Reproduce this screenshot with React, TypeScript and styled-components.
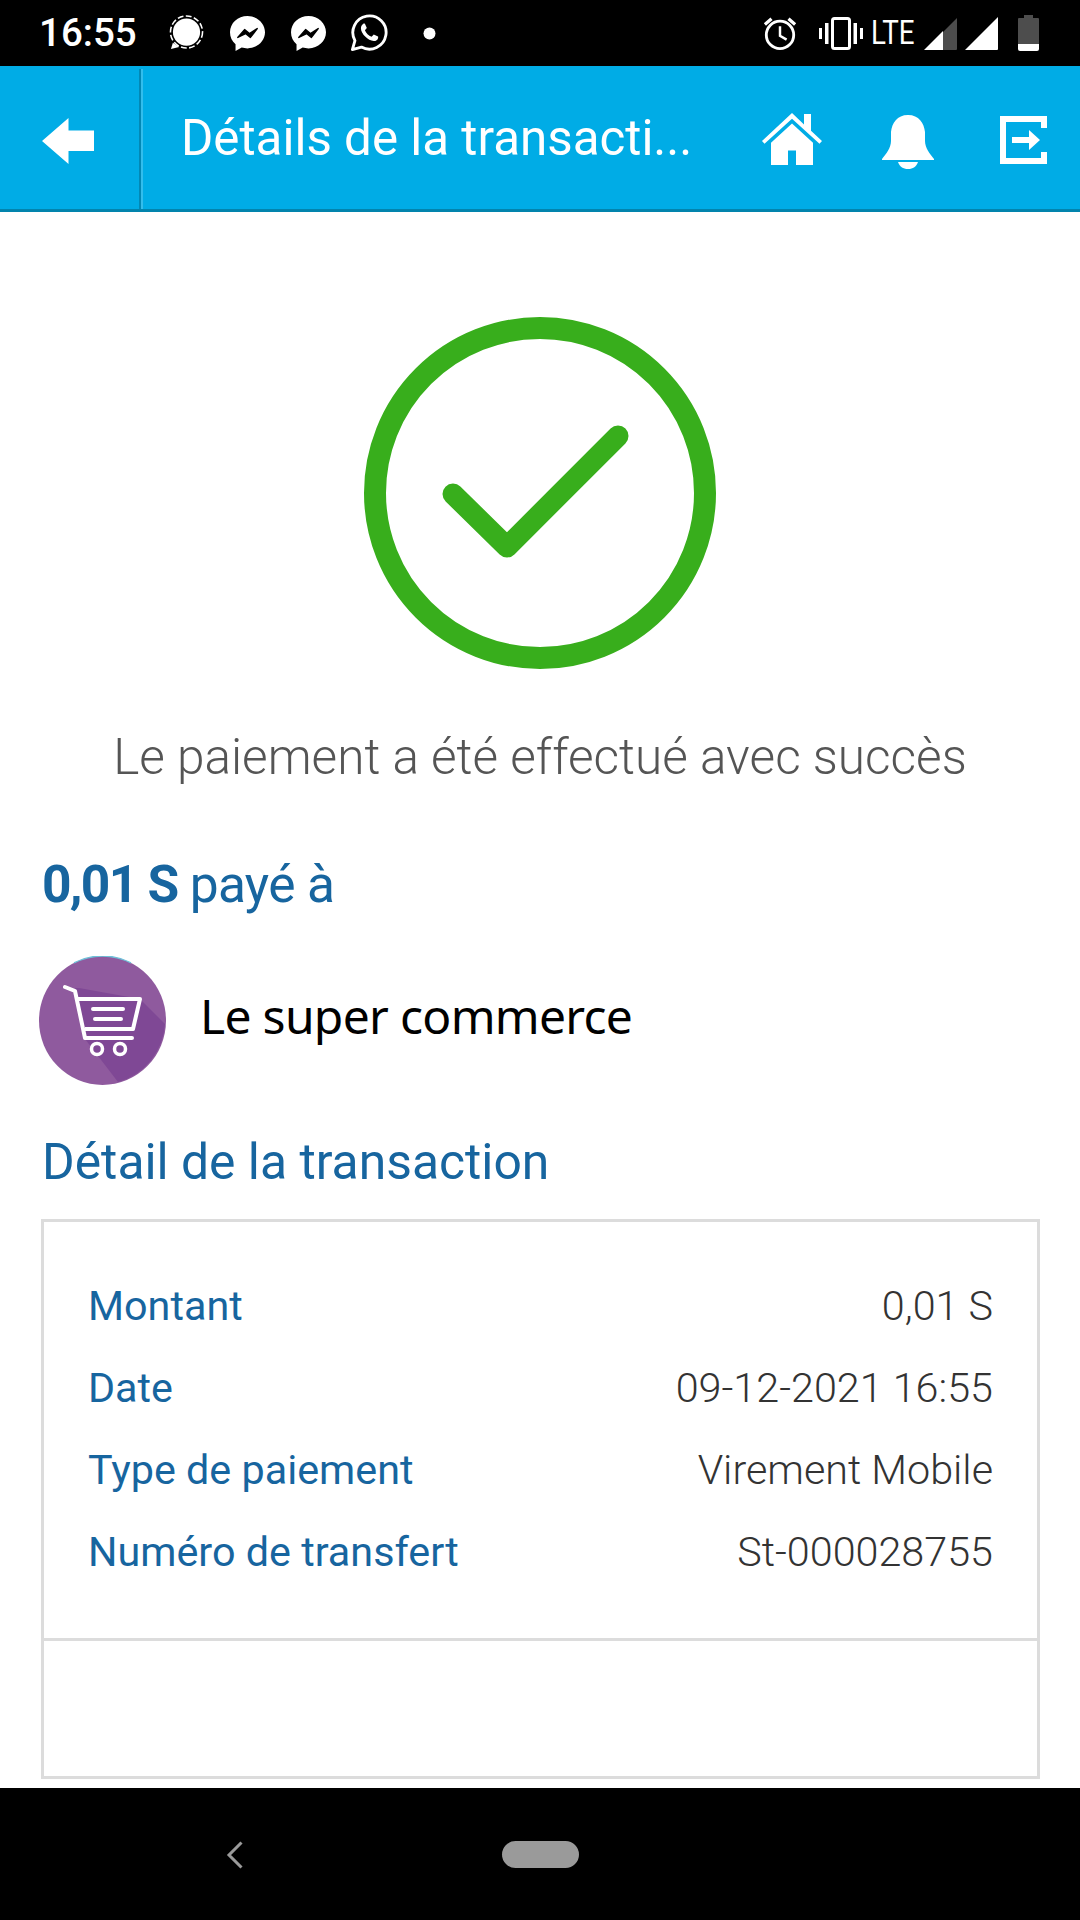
import React from "react";
import styled, { createGlobalStyle } from "styled-components";

const Global = createGlobalStyle`
  html, body { margin: 0; padding: 0; background: #fff; }
  * { box-sizing: border-box; }
`;

const Page = styled.div`
  width: 1080px;
  height: 1920px;
  display: flex;
  flex-direction: column;
  font-family: Roboto, "Liberation Sans", sans-serif;
  overflow: hidden;
`;

const StatusBar = styled.div`
  height: 66px;
  flex: none;
  background: #000;
  display: flex;
  align-items: center;
  padding: 0 41px 0 39px;
  color: #fff;
`;

const Clock = styled.span`
  font-size: 38.5px;
  font-weight: 500;
  width: 130px;
  line-height: 68px;
`;

const StatusGroup = styled.div<{ $right?: boolean }>`
  display: flex;
  align-items: center;
  margin-left: ${(p) => (p.$right ? "auto" : "0")};
`;

const StatusIcon = styled.svg<{ $ml?: number }>`
  display: block;
  flex: none;
  margin-left: ${(p) => p.$ml ?? 0}px;
`;

const Lte = styled.span`
  font-size: 33px;
  font-weight: 400;
  line-height: 66px;
  margin: 0 9px 0 8px;
  width: 44px;
  white-space: nowrap;
  transform: scaleX(0.84);
  transform-origin: left center;
`;

const AppBar = styled.header`
  height: 146px;
  flex: none;
  background: #00ace6;
  border-bottom: 3px solid #0284ad;
  display: flex;
  align-items: stretch;
`;

const BackCell = styled.div`
  width: 141px;
  flex: none;
  padding: 49px 0 0 42px;
  margin-top: 3px;
  border-right: 2px solid #0288b5;
  box-shadow: 2px 0 0 #33bdec;
`;

const BarTitle = styled.h1`
  margin: 0;
  flex: 1;
  padding-left: 40px;
  font-size: 49.3px;
  font-weight: 400;
  color: #fff;
  line-height: 145px;
  white-space: nowrap;
`;

const BarIcons = styled.div`
  display: flex;
  align-items: flex-start;
  padding-right: 33px;
`;

const BarIcon = styled.svg<{ $ml: number; $mt: number }>`
  margin: ${(p) => p.$mt}px 0 0 ${(p) => p.$ml}px;
  display: block;
  fill: #fff;
`;

const Body = styled.main`
  flex: 1;
  display: flex;
  flex-direction: column;
  min-height: 0;
`;

const HeroIcon = styled.svg`
  display: block;
  flex: none;
  margin: 105px auto 0;
`;

const Message = styled.p`
  margin: 58px 0 0;
  text-align: center;
  font-size: 49.5px;
  font-weight: 300;
  line-height: 60px;
  color: #555;
  white-space: nowrap;
`;

const Amount = styled.h2`
  margin: 68px 0 0 42px;
  font-size: 51.5px;
  font-weight: 400;
  line-height: 60px;
  letter-spacing: -0.7px;
  color: #17659f;
`;

const AmountValue = styled.b`
  font-weight: 700;
  letter-spacing: -1.7px;
`;

const Merchant = styled.div`
  margin: 41px 0 0 39px;
  display: flex;
  align-items: center;
  gap: 34px;
`;

const MerchantName = styled.span`
  font-family: "Noto Sans", "Open Sans", sans-serif;
  font-size: 48px;
  color: #000;
  line-height: 60px;
  letter-spacing: -0.7px;
  margin-bottom: 10px;
`;

const SectionTitle = styled.h3`
  margin: 47px 0 0 42px;
  font-size: 49.8px;
  font-weight: 400;
  line-height: 60px;
  color: #17659f;
`;

const Card = styled.section`
  margin: 27px 40px 0 41px;
  height: 560px;
  border: 3px solid #dcdcdc;
  display: flex;
  flex-direction: column;
`;

const Rows = styled.div`
  height: 419px;
  flex: none;
  padding: 43px 44px 0 44px;
  border-bottom: 3px solid #dcdcdc;
`;

const Row = styled.div`
  height: 82px;
  display: flex;
  justify-content: space-between;
  align-items: center;
  font-size: 41.3px;
`;

const Label = styled.span`
  color: #17659f;
`;

const Value = styled.span`
  color: #333;
  font-weight: 300;
`;

const NavBar = styled.footer`
  height: 132px;
  flex: none;
  background: #000;
  position: relative;
  display: flex;
  align-items: center;
  justify-content: center;
`;

const NavBack = styled.svg`
  position: absolute;
  left: 226px;
  top: 53px;
`;

const Pill = styled.div`
  width: 77px;
  height: 27px;
  border-radius: 14px;
  background: #9a9a9a;
  margin-left: 1px;
  margin-top: 1px;
`;

const rows = [
  ["Montant", "0,01 S"],
  ["Date", "09-12-2021 16:55"],
  ["Type de paiement", "Virement Mobile"],
  ["Numéro de transfert", "St-000028755"],
];

const Messenger = () => (
  <StatusIcon $ml={26} width="35" height="35" viewBox="0 0 36 36" preserveAspectRatio="none">
    <path d="M18 0C8 0 0 7.300 0 16.800c0 5 2.100 9.300 5.700 12.300V36l6.300-3.500c1.900.5 3.900.8 6 .8 10 0 18-7.400 18-16.500S28 0 18 0z" fill="#fff" />
    <path d="M8 22l7-8 5 4 8-5-7 9-5-4z" fill="#000" stroke="#000" strokeWidth="1.500" strokeLinejoin="round" />
  </StatusIcon>
);

export default function App() {
  return (
    <Page>
      <Global />
      <StatusBar>
        <Clock>16:55</Clock>
        <StatusGroup>
          <StatusIcon width="35" height="36" viewBox="0 0 36 36">
            <circle cx="18" cy="17" r="14" fill="#fff" />
            <path d="M4 28l-2 6.500 8.500-2" fill="#fff" />
            <circle cx="18" cy="17" r="16.500" fill="none" stroke="#fff" strokeWidth="1.600" strokeDasharray="6 2.500" />
          </StatusIcon>
          <Messenger />
          <Messenger />
          <StatusIcon $ml={24} width="38" height="38" viewBox="0 0 40 40">
            <path d="M2.500 37.500l2.700-9.500A17.500 17.500 0 1 1 12 34.800z" fill="none" stroke="#fff" strokeWidth="3" strokeLinejoin="round" />
            <path d="M14 10.500c-1.200.5-2.500 2-2.500 4.500 0 6 7.500 13 13.500 13.500 2.500 0 4-1.300 4.500-3 .3-1 .2-1.500 0-1.800l-4.500-2.200-2.300 2.500c-3-.8-6-3.800-7-6.800l2-2.400-2-4.500c-.5-.4-1.200-.4-1.700-.3z" fill="#fff" />
          </StatusIcon>
          <StatusIcon $ml={35} width="13" height="13" viewBox="0 0 13 13">
            <circle cx="6.500" cy="6.500" r="6" fill="#fff" />
          </StatusIcon>
        </StatusGroup>
        <StatusGroup $right>
          <StatusIcon width="34" height="36" viewBox="0 0 36 38" preserveAspectRatio="none">
            <circle cx="18" cy="21" r="14.500" fill="none" stroke="#fff" strokeWidth="3" />
            <path d="M18 12v10l7 4" fill="none" stroke="#fff" strokeWidth="2.600" />
            <path d="M2 10l7-6M34 10l-7-6" stroke="#fff" strokeWidth="3.500" fill="none" />
          </StatusIcon>
          <StatusIcon $ml={22} width="44" height="33" viewBox="0 0 44 33">
            <rect x="13.500" y="1.500" width="17" height="30" rx="2" fill="none" stroke="#fff" strokeWidth="3" />
            <rect x="0" y="11" width="3" height="11" fill="#fff" />
            <rect x="6" y="6" width="3.500" height="21" fill="#fff" />
            <rect x="34.500" y="6" width="3.500" height="21" fill="#fff" />
            <rect x="41" y="11" width="3" height="11" fill="#fff" />
          </StatusIcon>
          <Lte>LTE</Lte>
          <StatusIcon width="33" height="33" viewBox="0 0 33 33">
            <path d="M33 1v31a1 1 0 0 1-1 1H1z" fill="#4d4d4d" />
            <path d="M0 33L19 14v19z" fill="#fff" />
          </StatusIcon>
          <StatusIcon $ml={8} width="33" height="33" viewBox="0 0 33 33">
            <path d="M33 0v32a1 1 0 0 1-1 1H0z" fill="#fff" />
          </StatusIcon>
          <StatusIcon $ml={20} width="21" height="36" viewBox="0 0 21 36">
            <path d="M6 0h9v3h5a1 1 0 0 1 1 1v26H0V4a1 1 0 0 1 1-1h5z" fill="#4d4d4d" />
            <path d="M0 29h21v5a2 2 0 0 1-2 2H2a2 2 0 0 1-2-2z" fill="#fff" />
          </StatusIcon>
        </StatusGroup>
      </StatusBar>

      <AppBar>
        <BackCell>
          <svg width="52" height="46" viewBox="0 0 52 46" fill="#fff" style={{ display: "block" }}>
            <path d="M26.500 0L0 23l26.500 23V33H52V12.500H26.500z" />
          </svg>
        </BackCell>
        <BarTitle>Détails de la transacti...</BarTitle>
        <BarIcons>
          <BarIcon $ml={0} $mt={47} width="60" height="52" viewBox="0 0 60 54" preserveAspectRatio="none">
            <path d="M30 0L0 29l2.500 3L30 6l27.500 26 2.500-3-11-10.500V1h-7v11z" />
            <path d="M30 11L9 31v23h17V39h8v15h17V31z" />
          </BarIcon>
          <BarIcon $ml={60} $mt={49} width="52" height="54" viewBox="0 0 52 54">
            <path d="M26 0C15 0 10 8 9 17v9C9 33 4 39 0 44v1h52v-1c-4-5-9-11-9-18v-9C42 8 37 0 26 0z" />
            <path d="M16 47h20c-1.500 4.500-5 7-10 7s-8.500-2.500-10-7z" />
          </BarIcon>
          <BarIcon $ml={66} $mt={50} width="47" height="48" viewBox="0 0 47 48">
            <path d="M0 0h47v12h-6V6H6v36h35v-6h6v12H0z" />
            <path d="M12 21h17v-7l11 10-11 10v-7H12z" />
          </BarIcon>
        </BarIcons>
      </AppBar>

      <Body>
        <HeroIcon width="352" height="352" viewBox="0 0 352 352">
          <circle cx="176" cy="176" r="165" fill="none" stroke="#38ae1c" strokeWidth="22" />
          <path d="M89 177l54 53L254 119" fill="none" stroke="#38ae1c" strokeWidth="21" strokeLinecap="round" strokeLinejoin="round" />
        </HeroIcon>
        <Message>Le paiement a été effectué avec succès</Message>
        <Amount>
          <AmountValue>0,01 S</AmountValue> payé à
        </Amount>
        <Merchant>
          <svg width="127" height="129" viewBox="0 0 127 129" style={{ display: "block" }}>
            <ellipse cx="63.500" cy="64.500" rx="63.500" ry="64.500" fill="#8f5a9e" />
            <path d="M36 32h4l61 11 25 25a63.500 64.500 0 0 1-47 58L46 83z" fill="#7f4895" />
            <path d="M35 6.900A63.500 64.500 0 0 1 92 6.900" fill="none" stroke="#6fc0d8" strokeWidth="1.500" />
            <path d="M26 31l10 4 10 47h47" fill="none" stroke="#fff" strokeWidth="4" strokeLinecap="round" strokeLinejoin="round" />
            <path d="M38 43h63l-7 30H46" fill="none" stroke="#fff" strokeWidth="4" strokeLinejoin="round" />
            <path d="M54 53h30M56 63h26" stroke="#fff" strokeWidth="4" strokeLinecap="round" />
            <circle cx="58" cy="93" r="5.500" fill="none" stroke="#fff" strokeWidth="3.500" />
            <circle cx="81" cy="93" r="5.500" fill="none" stroke="#fff" strokeWidth="3.500" />
          </svg>
          <MerchantName>Le super commerce</MerchantName>
        </Merchant>
        <SectionTitle>Détail de la transaction</SectionTitle>
        <Card>
          <Rows>
            {rows.map(([l, v]) => (
              <Row key={l}>
                <Label>{l}</Label>
                <Value>{v}</Value>
              </Row>
            ))}
          </Rows>
        </Card>
      </Body>

      <NavBar>
        <NavBack width="18" height="28" viewBox="0 0 18 28">
          <path d="M15.500 1.500L3 14l12.500 12.500" fill="none" stroke="#9a9a9a" strokeWidth="3" />
        </NavBack>
        <Pill />
      </NavBar>
    </Page>
  );
}
